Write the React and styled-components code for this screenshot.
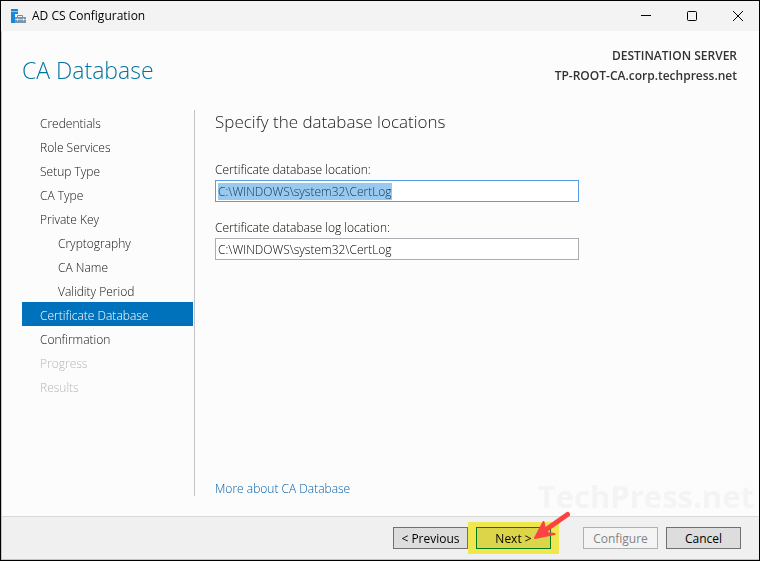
import React, { useEffect, useRef } from "react";
import styled, { createGlobalStyle, css } from "styled-components";

const GlobalStyle = createGlobalStyle`
  * {
    box-sizing: border-box;
  }
  body {
    margin: 0;
    font-family: "Open Sans", "Noto Sans", sans-serif;
    font-size: 12px;
    font-weight: 300;
    line-height: 16px;
    color: #000;
  }
`;

const Window = styled.div`
  position: relative;
  display: flex;
  flex-direction: column;
  min-height: 100vh;
  border: 1px solid #000;
  background: #fcfcfc;
  box-shadow: inset 1px -1px 0 #c4c4c4;
`;

const TitleBar = styled.header`
  display: flex;
  align-items: center;
  gap: 4px;
  height: 30px;
  padding-left: 9px;
  background: #f3f3f3;
`;

const WindowTitle = styled.span`
  flex: 1;
  margin-left: 1px;
  font-weight: 400;
`;

const WindowButton = styled.button`
  display: flex;
  align-items: center;
  justify-content: center;
  width: 42px;
  height: 30px;
  padding: 0;
  border: 0;
  background: transparent;
`;

const PageHeader = styled.div`
  display: flex;
  justify-content: space-between;
  padding: 15px 22px 0 21px;
`;

const PageTitle = styled.h1`
  margin: 8px 0 0;
  font-size: 23px;
  font-weight: 300;
  line-height: 32px;
  color: #00749e;
`;

const Destination = styled.div`
  font-weight: 600;
  line-height: 20px;
  text-align: right;
  color: #333;
`;

const Body = styled.div`
  display: flex;
  flex: 1;
  padding: 24px 22px 20px 21px;
`;

const Steps = styled.nav`
  width: 173px;
  padding-right: 1px;
  border-right: 1px solid #c4c4c4;
`;

const Step = styled.a`
  display: block;
  padding-top: 4px;
  padding-left: ${({ $nested }) => ($nested ? 36 : 18)}px;
  line-height: 20px;
  text-decoration: none;
  color: #111;

  ${({ $active }) =>
    $active &&
    css`
      background: #0072bc;
      color: #fff;
    `}
  ${({ $disabled }) =>
    $disabled &&
    css`
      color: #b8b8b8;
    `}
`;

const Content = styled.main`
  display: flex;
  flex: 1;
  flex-direction: column;
  align-items: flex-start;
  padding-left: 20px;
`;

const Heading = styled.h2`
  margin: 0 0 28px;
  font-size: 17px;
  font-weight: 300;
  line-height: 24px;
  color: #222;
`;

const Field = styled.div`
  display: flex;
  flex-direction: column;
  width: 100%;
  max-width: 364px;
  margin-bottom: 18px;
`;

const Label = styled.label`
  line-height: 16px;
  margin-bottom: 2px;
`;

const TextInput = styled.input`
  height: 22px;
  padding: 0 2px;
  border: 1px solid #abadb3;
  background: #fff;
  font: inherit;
  color: #000;
  outline: none;

  &:focus {
    border-color: #569de5;
  }
  &::selection {
    background: #99c9ef;
    color: #0b3558;
  }
`;

const MoreLink = styled.a`
  margin-top: auto;
  line-height: 14px;
  text-decoration: none;
  color: #0060ac;
`;

const Footer = styled.footer`
  display: flex;
  justify-content: flex-end;
  gap: 8px;
  padding: 10px 18px;
  margin: 0 0 1px 1px;
  border-top: 1px solid #d9d9d9;
  background: #f0f0f0;
`;

const Button = styled.button`
  position: relative;
  width: 75px;
  height: 22px;
  padding: 1px 0 0;
  border: 1px solid #707070;
  background: #ddd;
  font: inherit;
  font-weight: 400;
  color: #000;

  &:disabled {
    border-color: #adb2b5;
    background: #f4f4f4;
    color: #838383;
  }
`;

const NextButton = styled(Button)`
  margin-right: 24px;
  border-color: #007f60;
`;

const Marker = styled.span`
  position: absolute;
  inset: -6px -9px;
  background: #fff654;
  mix-blend-mode: multiply;
`;

const Arrow = styled.svg`
  position: absolute;
  right: -20px;
  bottom: 7px;
  z-index: 2;
`;

const Watermark = styled.div`
  position: absolute;
  right: 5px;
  bottom: 44px;
  font-size: 31px;
  font-weight: 700;
  line-height: 40px;
  color: #f4f4f4;
  pointer-events: none;
`;

const steps = [
  { name: "Credentials" },
  { name: "Role Services" },
  { name: "Setup Type" },
  { name: "CA Type" },
  { name: "Private Key" },
  { name: "Cryptography", nested: true },
  { name: "CA Name", nested: true },
  { name: "Validity Period", nested: true },
  { name: "Certificate Database", active: true },
  { name: "Confirmation" },
  { name: "Progress", disabled: true },
  { name: "Results", disabled: true },
];

const AppIcon = () => (
  <svg width="17" height="16" viewBox="0 0 17 16" aria-hidden="true">
    <path d="M1 1h7v5H5v9H1z" fill="#1b87d6" />
    <path d="M1 3.500h7" stroke="#8cc4ee" />
    <path d="M7.500 9V7.500h5V9" fill="none" stroke="#6f8ba3" />
    <rect x="5" y="9" width="11" height="6" fill="#7a96ad" />
    <path d="M5 11.500h11" stroke="#c3d0da" />
    <path d="M7.500 10.500v2M13.500 10.500v2" stroke="#fff" />
  </svg>
);

const App = () => {
  const databaseInput = useRef(null);

  useEffect(() => {
    databaseInput.current.focus();
    databaseInput.current.select();
  }, []);

  return (
    <>
      <GlobalStyle />
      <Window>
        <TitleBar>
          <AppIcon />
          <WindowTitle>AD CS Configuration</WindowTitle>
          <WindowButton aria-label="Minimize">
            <svg width="10" height="10" stroke="#000">
              <path d="M0 4.500h10" />
            </svg>
          </WindowButton>
          <WindowButton aria-label="Maximize">
            <svg width="10" height="10" fill="none" stroke="#000">
              <rect x="0.500" y="0.500" width="9" height="9" rx="1" />
            </svg>
          </WindowButton>
          <WindowButton aria-label="Close">
            <svg width="10" height="10" stroke="#000">
              <path d="M0 0l10 10M10 0L0 10" />
            </svg>
          </WindowButton>
        </TitleBar>
        <PageHeader>
          <PageTitle>CA Database</PageTitle>
          <Destination>
            <div>DESTINATION SERVER</div>
            <div>TP-ROOT-CA.corp.techpress.net</div>
          </Destination>
        </PageHeader>
        <Body>
          <Steps>
            {steps.map(({ name, nested, active, disabled }) => (
              <Step
                key={name}
                href="#"
                $nested={nested}
                $active={active}
                $disabled={disabled}
                aria-current={active ? "step" : undefined}
                aria-disabled={disabled}
              >
                {name}
              </Step>
            ))}
          </Steps>
          <Content>
            <Heading>Specify the database locations</Heading>
            <Field>
              <Label htmlFor="database">Certificate database location:</Label>
              <TextInput
                id="database"
                ref={databaseInput}
                defaultValue="C:\WINDOWS\system32\CertLog"
              />
            </Field>
            <Field>
              <Label htmlFor="log">Certificate database log location:</Label>
              <TextInput id="log" defaultValue="C:\WINDOWS\system32\CertLog" />
            </Field>
            <MoreLink href="#">More about CA Database</MoreLink>
          </Content>
        </Body>
        <Watermark>TechPress.net</Watermark>
        <Footer>
          <Button>&lt; Previous</Button>
          <NextButton>
            Next &gt;
            <Marker />
            <Arrow width="38" height="30" viewBox="0 0 38 30" aria-hidden="true">
              <path
                d="M35.500 3.500L12 20"
                stroke="#fb4343"
                strokeWidth="5"
                strokeLinecap="round"
              />
              <path
                d="M3 27L11.500 11L13 18.500L15.500 22L22.500 23Z"
                fill="#fb4343"
                stroke="#fb4343"
                strokeWidth="2"
                strokeLinejoin="round"
              />
            </Arrow>
          </NextButton>
          <Button disabled>Configure</Button>
          <Button>Cancel</Button>
        </Footer>
      </Window>
    </>
  );
};

export default App;
